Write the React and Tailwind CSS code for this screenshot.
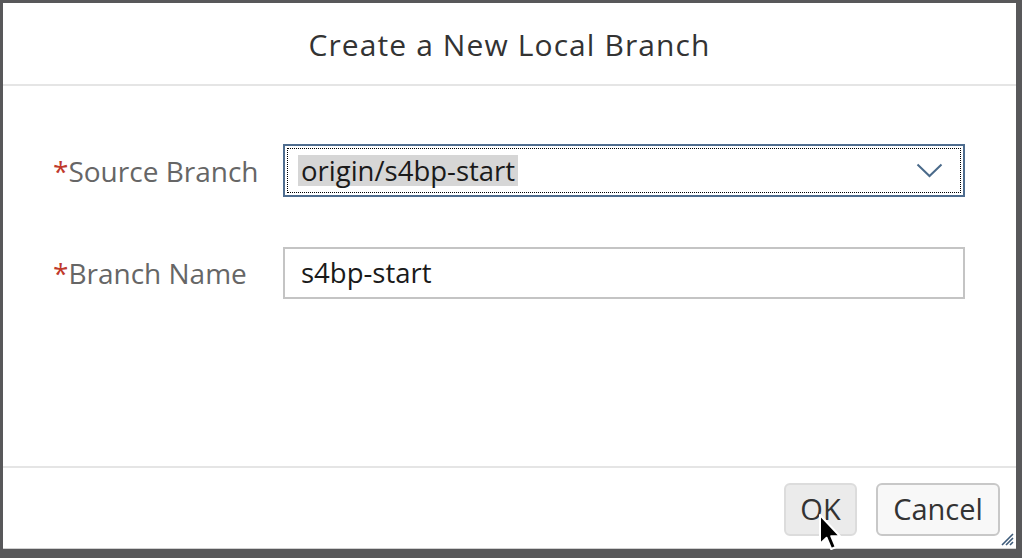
const font = { fontFamily: '"Open Sans", "Noto Sans", sans-serif' };

function Label({ children }) {
  return (
    <div className="w-[230px] shrink-0 text-[28px] text-[#666666]">
      <span className="text-[#c0392b]">*</span>
      {children}
    </div>
  );
}

function Cursor() {
  return (
    <svg className="absolute left-[818px] top-[513px] z-10" width="26" height="40" viewBox="0 0 13 20">
      <path
        d="M1 1 L1 15.5 L4.3 12.4 L6.6 18 L8.9 17 L6.6 11.6 L11 11.6 Z"
        fill="#000"
        stroke="#fff"
        strokeWidth="1"
        strokeLinejoin="round"
      />
    </svg>
  );
}

export default function App() {
  return (
    <div className="relative w-[1022px] h-[558px] bg-[#58585a] pt-[3px] pl-[3px] pr-[6px] pb-[9px]" style={font}>
      <div className="h-full bg-white flex flex-col border-b border-[#d0d0d0]">
        {/* Header */}
        <div className="h-[83px] shrink-0 flex items-center justify-center border-b-2 border-[#e5e5e5] pt-[3px]">
          <h1 className="text-[30px] tracking-[1.1px] text-[#333333] leading-none">Create a New Local Branch</h1>
        </div>

        {/* Form */}
        <div className="flex-1 pt-[58px] pl-[50px] pr-[51px] flex flex-col gap-[50px]">
          <div className="flex items-center">
            <Label>Source Branch</Label>
            <div className="ml-auto w-[682px] h-[53px] border-2 border-[#4f6d8f] p-[2px]">
              <div className="h-full flex items-center justify-between border border-dotted border-black pl-[10px] pr-[17px]">
                <span className="bg-[#d6d6d6] text-[27.5px] text-[#1a1a1a] leading-[31px] px-[3px]">origin/s4bp-start</span>
                <svg width="27" height="15" viewBox="0 0 27 15">
                  <path d="M1.5 1.5 L13.5 13 L25.5 1.5" fill="none" stroke="#4a6a8a" strokeWidth="2" />
                </svg>
              </div>
            </div>
          </div>
          <div className="flex items-center">
            <Label>Branch Name</Label>
            <div className="ml-auto w-[682px] h-[52px] border-2 border-[#c4c4c4] flex items-center pl-[16px]">
              <span className="text-[27.5px] text-[#1a1a1a]">s4bp-start</span>
            </div>
          </div>
        </div>

        {/* Footer */}
        <div className="relative h-[82px] shrink-0 border-t-2 border-[#e5e5e5] flex items-center justify-end gap-[19px] pr-[16px] pt-[2px]">
          <button className="w-[73px] h-[53px] rounded-[6px] border-2 border-[#dcdcdc] bg-[#ebebeb] text-[29px] text-[#333333]">
            OK
          </button>
          <button className="w-[124px] h-[53px] rounded-[6px] border-2 border-[#c8c8c8] bg-[#f8f8f8] text-[29px] text-[#333333]">
            Cancel
          </button>
          <svg className="absolute right-[2px] bottom-[2px]" width="15" height="15" viewBox="0 0 15 15">
            <path d="M14 3 L3 14 M14 7 L7 14 M14 11 L11 14" stroke="#3e5b7a" strokeWidth="1.6" />
          </svg>
        </div>
      </div>
      <Cursor />
    </div>
  );
}
